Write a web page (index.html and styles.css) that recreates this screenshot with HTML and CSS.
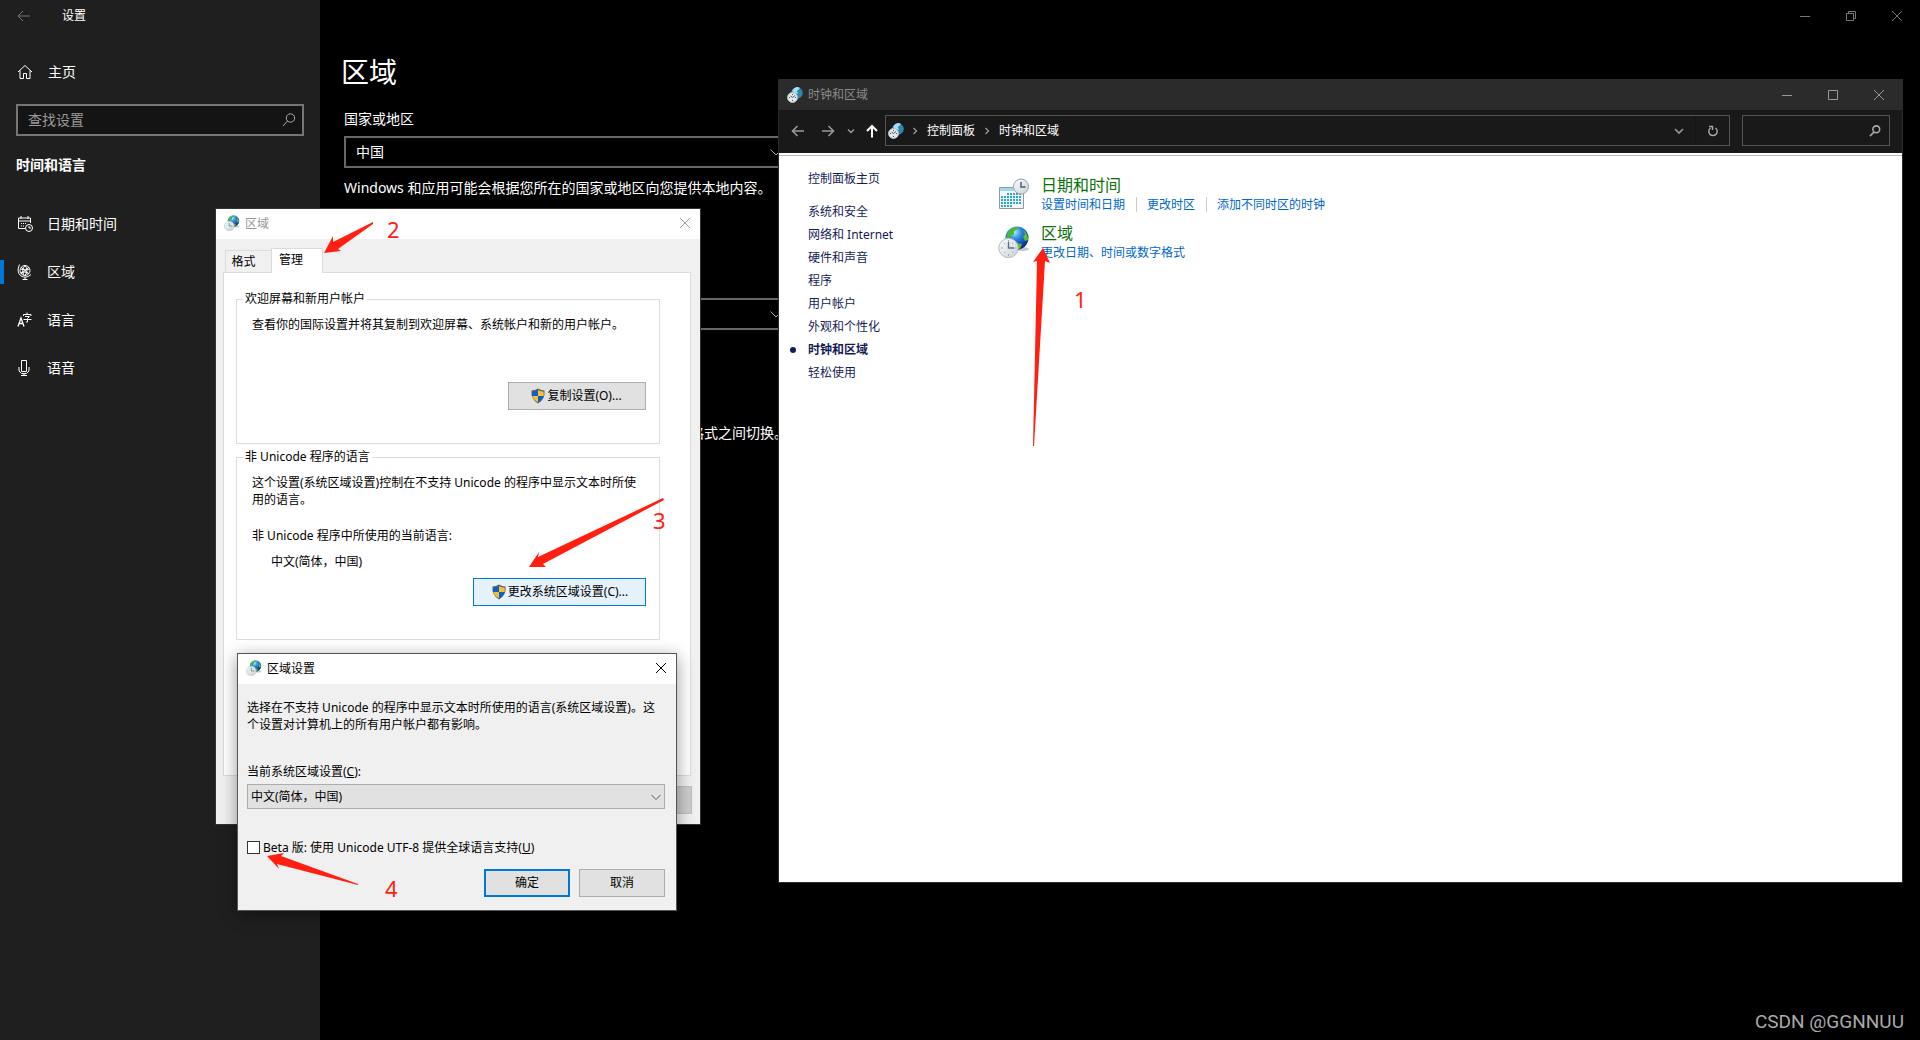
FILE: index.html
```html
<!DOCTYPE html>
<html lang="zh-CN">
  <head>
    <meta charset="utf-8" />
    <meta name="viewport" content="width=device-width, initial-scale=1" />
    <title>设置</title>
    <link rel="stylesheet" href="styles.css">
  </head>
  <body>
    <!-- shared icons -->
    <svg class="defs" width="0" height="0" aria-hidden="true">
      <defs>
        <radialGradient id="sea" cx="40%" cy="25%" r="80%">
          <stop offset="0" stop-color="#a8ecff" />
          <stop offset="0.35" stop-color="#2f8fe0" />
          <stop offset="0.75" stop-color="#1440b0" />
          <stop offset="1" stop-color="#0b1f70" />
        </radialGradient>
        <linearGradient id="face" x1="0" y1="0" x2="1" y2="1">
          <stop offset="0" stop-color="#fbfcfd" />
          <stop offset="1" stop-color="#c9d2d8" />
        </linearGradient>
      </defs>
      <symbol id="region" viewBox="0 0 32 32">
        <ellipse cx="23" cy="23" rx="8" ry="2" fill="#8a9299" opacity="0.5" />
        <circle cx="19" cy="12" r="11.500" fill="url(#sea)" />
        <path d="M9 8 Q12 2 18 1 L20 3 L16 5 L16 8 L12 10 L11 14 L8 15 Z" fill="#4cb82e" />
        <path d="M25 4 Q30 7 30 14 L27 15 L25 11 L27 8 Z M19 17 L24 18 L22 23 L19 22 Z" fill="#5fbf25" />
        <circle cx="10.500" cy="22" r="9.700" fill="url(#face)" stroke="#b4bcc1" />
        <path d="M10.500 14 V16 M10.500 28 V30 M3 22 H5 M16.500 22 H18.500 M6 17 L7 18 M15 27 L14 26 M6 27 L7 26 M15 17 L14 18" stroke="#a0a9af" fill="none" />
        <path d="M10.500 16 V22 H16" stroke="#5d7280" stroke-width="1.400" fill="none" />
      </symbol>
      <symbol id="clocks" viewBox="0 0 16 16">
        <circle cx="10" cy="6" r="5.800" fill="#2b87ad" />
        <path d="M5 4 Q7 0 11 0 L13 1 L10 4 L11 7 L7 6 Z" fill="#a9dcef" />
        <circle cx="5.500" cy="10.500" r="5" fill="#e6e9eb" stroke="#b5babd" />
        <path d="M5.500 7 V8 M5.500 13 V14 M2 10.500 H3 M8 10.500 H9 M3.500 9 L5.500 10.500 L8 8.500" stroke="#4b5357" fill="none" />
      </symbol>
      <symbol id="shield" viewBox="0 0 16 16">
        <path d="M8 0.500 Q11 2.500 14.500 2.500 Q15.500 11 8 15.500 Q0.500 11 1.500 2.500 Q5 2.500 8 0.500 Z" fill="#5a5e62" />
        <path d="M8 2 V8 H2.300 Q2.100 5.500 2.500 3.600 Q5.500 3.500 8 2 Z M8 8 H13.700 Q12.600 12 8 14.300 Z" fill="#0a62c8" />
        <path d="M8 2 V8 H13.700 Q13.900 5.500 13.500 3.600 Q10.500 3.500 8 2 Z M8 8 H2.300 Q3.400 12 8 14.300 Z" fill="#fbbd33" />
      </symbol>
      <symbol id="close" viewBox="0 0 12 12">
        <path d="M1 1 L11 11 M11 1 L1 11" stroke="currentColor" fill="none" />
      </symbol>
      <symbol id="min" viewBox="0 0 12 12">
        <path d="M1 6.500 H11" stroke="currentColor" fill="none" />
      </symbol>
      <symbol id="down" viewBox="0 0 12 12">
        <path d="M0.500 3.500 L6 9 L11.500 3.500" stroke="currentColor" fill="none" />
      </symbol>
      <symbol id="find" viewBox="0 0 14 14">
        <circle cx="8.500" cy="5" r="4.200" stroke="currentColor" fill="none" />
        <path d="M5.500 8 L1 13" stroke="currentColor" fill="none" />
      </symbol>
    </svg>

    <div class="settings">
      <nav class="side">
        <div class="side-title">
          <button class="back" aria-label="返回">
            <svg width="14" height="12" viewBox="0 0 14 12"><path d="M1 6 H13 M6 1 L1 6 L6 11" stroke="currentColor" fill="none" /></svg>
          </button>
          <span>设置</span>
        </div>
        <a class="item home" href="#home">
          <svg width="16" height="16" viewBox="0 0 16 16"><path d="M1 8 L8 1.500 L15 8 M3 6.500 V14.500 H6.500 V9.500 H9.500 V14.500 H13 V6.500" stroke="currentColor" fill="none" /></svg>
          主页
        </a>
        <div class="search">
          <input type="text" placeholder="查找设置" aria-label="查找设置" />
          <svg width="14" height="14"><use href="#find" /></svg>
        </div>
        <h2 class="side-head">时间和语言</h2>
        <a class="item" href="#datetime">
          <svg width="16" height="16" viewBox="0 0 16 16">
            <path d="M8 12.500 H1.500 V2 H13.500 V7 M1.500 5 H13.500 M4 0 V3 M11 0 V3" stroke="currentColor" fill="none" />
            <path d="M4 7.500 H9 M4 10 H7" stroke="currentColor" stroke-dasharray="1 1" fill="none" />
            <circle cx="12" cy="12" r="3.500" stroke="currentColor" fill="none" />
            <path d="M12 10 V12 H14" stroke="currentColor" fill="none" />
          </svg>
          日期和时间
        </a>
        <a class="item active" href="#region-page">
          <svg width="16" height="16" viewBox="0 0 16 16">
            <circle cx="8" cy="6.500" r="5" stroke="currentColor" fill="none" />
            <path d="M3.500 5 Q8 7 12.500 5 M3.500 8.500 Q8 7 12 9.500 M8 1.500 Q4 6 7 11.500 M8 1.500 Q12 6 8 11.500 M4 3 L12 10 M12 3 L4 10" stroke="currentColor" fill="none" />
            <path d="M2.500 0.500 Q-1 8 4 12 Q9 15 14 10.500 M8 13 V15 M5.500 15.500 H10.500" stroke="currentColor" fill="none" />
          </svg>
          区域
        </a>
        <a class="item" href="#language">
          <svg width="16" height="16" viewBox="0 0 16 16">
            <path d="M1 14.500 L4 6 L7 14.500 M2 11.500 H6" stroke="currentColor" stroke-width="1.300" fill="none" />
            <path d="M6.500 4 V2.500 H14 V4 M10 0.500 V2.500 M8 4.500 H12.500 L10.500 6.500 V10 H9 M6.500 7.500 H14.500" stroke="currentColor" fill="none" />
          </svg>
          语言
        </a>
        <a class="item" href="#speech">
          <svg width="16" height="16" viewBox="0 0 16 16"><path d="M4.500 0.500 H9.500 V11.500 H4.500 Z M2 7 V11 L4.500 13.500 H9.500 L12 11 V7 M7 13.500 V15.500 M4 15.500 H10" stroke="currentColor" fill="none" /></svg>
          语音
        </a>
      </nav>

      <main class="main">
        <div class="controls dim">
          <button aria-label="最小化"><svg width="12" height="12"><use href="#min" /></svg></button>
          <button aria-label="还原"><svg width="12" height="12" viewBox="0 0 12 12"><path d="M1.500 3.500 H8.500 V10.500 H1.500 Z M3.500 3.500 V1.500 H10.500 V8.500 H8.500" stroke="currentColor" fill="none" /></svg></button>
          <button aria-label="关闭"><svg width="12" height="12"><use href="#close" /></svg></button>
        </div>
        <div class="page">
          <h1>区域</h1>
          <label for="country">国家或地区</label>
          <div class="drop">
            <select id="country"><option>中国</option></select>
            <svg width="12" height="12"><use href="#down" /></svg>
          </div>
          <p>Windows 和应用可能会根据您所在的国家或地区向您提供本地内容。</p>
          <div class="drop second">
            <select aria-label="区域格式"><option></option></select>
            <svg width="12" height="12"><use href="#down" /></svg>
          </div>
          <p class="tail">格式之间切换。</p>
        </div>
      </main>
    </div>

    <section class="window panel">
      <header class="panel-title">
        <svg width="16" height="16"><use href="#clocks" /></svg>
        <span>时钟和区域</span>
        <div class="controls">
          <button aria-label="最小化"><svg width="12" height="12"><use href="#min" /></svg></button>
          <button aria-label="最大化"><svg width="12" height="12" viewBox="0 0 12 12"><path d="M1.500 1.500 H10.500 V10.500 H1.500 Z" stroke="currentColor" fill="none" /></svg></button>
          <button aria-label="关闭"><svg width="12" height="12"><use href="#close" /></svg></button>
        </div>
      </header>
      <div class="toolbar">
        <div class="arrows">
          <button aria-label="后退"><svg width="14" height="14" viewBox="0 0 14 14"><path d="M1 7 H13 M6.500 2 L1.500 7 L6.500 12" stroke="currentColor" stroke-width="1.600" fill="none" /></svg></button>
          <button aria-label="前进"><svg width="14" height="14" viewBox="0 0 14 14"><path d="M1 7 H13 M7.500 2 L12.500 7 L7.500 12" stroke="currentColor" stroke-width="1.600" fill="none" /></svg></button>
          <button class="recent" aria-label="最近"><svg width="8" height="8" viewBox="0 0 8 8"><path d="M1 2.500 L4 5.500 L7 2.500" stroke="currentColor" stroke-width="1.500" fill="none" /></svg></button>
          <button class="up" aria-label="向上"><svg width="14" height="14" viewBox="0 0 14 14"><path d="M7 1.500 V13.500 M2 7 L7 2 L12 7" stroke="currentColor" stroke-width="2" fill="none" /></svg></button>
        </div>
        <div class="address">
          <svg width="16" height="16"><use href="#clocks" /></svg>
          <svg class="sep" width="8" height="8" viewBox="0 0 8 8"><path d="M2.500 1 L5.500 4 L2.500 7" stroke="currentColor" stroke-width="1.300" fill="none" /></svg>
          <a href="#panel">控制面板</a>
          <svg class="sep" width="8" height="8" viewBox="0 0 8 8"><path d="M2.500 1 L5.500 4 L2.500 7" stroke="currentColor" stroke-width="1.300" fill="none" /></svg>
          <a href="#clock">时钟和区域</a>
          <button class="history" aria-label="历史"><svg width="10" height="10" viewBox="0 0 10 10"><path d="M1 3 L5 7 L9 3" stroke="currentColor" stroke-width="1.600" fill="none" /></svg></button>
          <button class="reload" aria-label="刷新"><svg width="12" height="12" viewBox="0 0 12 12"><path d="M8.500 3 A4.200 4.200 0 1 1 3.500 3 M2 1.500 H5.500 V5" stroke="currentColor" stroke-width="1.400" fill="none" /></svg></button>
        </div>
        <div class="find">
          <input type="text" aria-label="搜索控制面板" />
          <svg width="12" height="12" viewBox="0 0 14 14"><circle cx="8.500" cy="5" r="4" stroke="currentColor" stroke-width="1.800" fill="none" /><path d="M6 8 L1 13" stroke="currentColor" stroke-width="1.800" /></svg>
        </div>
      </div>
      <div class="panel-body">
        <nav class="links">
          <a class="first" href="#panel">控制面板主页</a>
          <a href="#security">系统和安全</a>
          <a href="#network">网络和 Internet</a>
          <a href="#hardware">硬件和声音</a>
          <a href="#programs">程序</a>
          <a href="#accounts">用户帐户</a>
          <a href="#appearance">外观和个性化</a>
          <a class="current" href="#clock">时钟和区域</a>
          <a href="#ease">轻松使用</a>
        </nav>
        <div class="groups">
          <article class="group">
            <svg width="32" height="32" viewBox="0 0 32 32">
              <path d="M1.500 9.500 H25.500 V30.500 H1.500 Z" fill="#f4f8fa" stroke="#8e9ba2" />
              <path d="M2 10 H25 V13 H2 Z" fill="#9fd8e8" />
              <path d="M9 16 H24 M3 19 H24 M3 22 H24 M3 25 H24 M3 28 H15" stroke="#2ba6c9" stroke-width="2" stroke-dasharray="2 1" />
              <circle cx="23" cy="8.500" r="7.500" fill="url(#face)" stroke="#9aa4aa" />
              <path d="M23 4 V9 H27.500" stroke="#4e6270" stroke-width="1.500" fill="none" />
            </svg>
            <div>
              <h3><a href="#date">日期和时间</a></h3>
              <ul>
                <li><a href="#set">设置时间和日期</a></li>
                <li><a href="#zone">更改时区</a></li>
                <li><a href="#add">添加不同时区的时钟</a></li>
              </ul>
            </div>
          </article>
          <article class="group">
            <svg width="32" height="32"><use href="#region" /></svg>
            <div>
              <h3><a href="#region-link">区域</a></h3>
              <ul>
                <li><a href="#format">更改日期、时间或数字格式</a></li>
              </ul>
            </div>
          </article>
        </div>
      </div>
    </section>

    <section class="window dialog region-dialog">
      <header class="dialog-title inactive">
        <svg width="16" height="16"><use href="#region" /></svg>
        <span>区域</span>
        <button aria-label="关闭"><svg width="12" height="12"><use href="#close" /></svg></button>
      </header>
      <div class="region-body">
        <div class="tabs">
          <button class="tab">格式</button>
          <button class="tab selected">管理</button>
        </div>
        <div class="tab-page">
          <fieldset>
            <legend>欢迎屏幕和新用户帐户</legend>
            <p>查看你的国际设置并将其复制到欢迎屏幕、系统帐户和新的用户帐户。</p>
            <div class="row copy-row">
              <button class="btn copy"><svg width="16" height="16"><use href="#shield" /></svg>复制设置(O)...</button>
            </div>
          </fieldset>
          <fieldset>
            <legend>非 Unicode 程序的语言</legend>
            <p>这个设置(系统区域设置)控制在不支持 Unicode 的程序中显示文本时所使用的语言。</p>
            <p class="now">非 Unicode 程序中所使用的当前语言:</p>
            <p class="lang">中文(简体，中国)</p>
            <div class="row">
              <button class="btn change"><svg width="16" height="16"><use href="#shield" /></svg>更改系统区域设置(C)...</button>
            </div>
          </fieldset>
        </div>
        <div class="row foot">
          <button class="btn off" aria-label="应用" disabled></button>
        </div>
      </div>
    </section>

    <section class="window dialog locale-dialog">
      <header class="dialog-title">
        <svg width="16" height="16"><use href="#region" /></svg>
        <span>区域设置</span>
        <button aria-label="关闭"><svg width="12" height="12"><use href="#close" /></svg></button>
      </header>
      <form class="locale-body">
        <p>选择在不支持 Unicode 的程序中显示文本时所使用的语言(系统区域设置)。这个设置对计算机上的所有用户帐户都有影响。</p>
        <label class="locale-label" for="locale">当前系统区域设置(<u>C</u>):</label>
        <div class="combo">
          <select id="locale"><option>中文(简体，中国)</option></select>
          <svg width="10" height="10" viewBox="0 0 12 12"><use href="#down" /></svg>
        </div>
        <div class="check">
          <input type="checkbox" id="utf8" />
          <label for="utf8">Beta 版: 使用 Unicode UTF-8 提供全球语言支持(<u>U</u>)</label>
        </div>
        <div class="row">
          <button type="button" class="btn ok">确定</button>
          <button type="button" class="btn cancel">取消</button>
        </div>
      </form>
    </section>

    <!-- step arrows drawn over the windows -->
    <svg class="marks" width="1100" height="920">
      <path d="M1043 248 L1033 262 L1037 261 L1033 446 H1034 L1045 261 L1050 263 Z" />
      <path d="M324 253 L333 236 L333 242 L373 222 V224 L338 249 L341 251 Z" />
      <path d="M529 567 L539 552 L538 557 L663 498 L664 500 L543 564 L546 567 Z" />
      <path d="M267 856 L284 853 L281 856 L358 884 V885 L277 864 L279 869 Z" />
      <text x="1074" y="308">1</text>
      <text x="387" y="238">2</text>
      <text x="653" y="529">3</text>
      <text x="385" y="897">4</text>
    </svg>
    <div class="watermark">CSDN @GGNNUU</div>
  </body>
</html>
```

FILE: styles.css
```css
* {box-sizing: border-box}
body {
  margin: 0;
  background: #000;
  color: #fff;
  font: 14px/20px "Noto Sans", "Noto Sans CJK SC", sans-serif;
  position: relative;
  min-height: 100vh;
  overflow: hidden;
}
button, input, select {
  font: inherit;
  color: inherit;
  border: 0;
  border-radius: 0;
  background: none;
  padding: 0;
  margin: 0;
  outline: 0;
}
select {appearance: none}
a {color: inherit; text-decoration: none}
p, h1, h2, h3, ul {margin: 0; padding: 0}
svg {display: block; flex: none}
.defs {position: absolute}

/* settings app */
.settings {
  display: flex;
  min-height: 100vh;
}
.side {
  width: 320px;
  background: #1f1f1f;
}
.side-title {
  display: flex;
  align-items: center;
  height: 32px;
  padding-left: 17px;
  gap: 31px;
  font-size: 12px;
}
.back {color: #777}
.item {
  display: flex;
  align-items: center;
  height: 48px;
  padding-left: 13px;
  gap: 14px;
  border-left: 4px solid transparent;
}
.item.active {
  border-image: linear-gradient(transparent 25%, #0078d7 25% 75%, transparent 75%) 0 0 0 4;
}
.home {gap: 15px; margin: 16px 0 8px}
.search {
  display: flex;
  align-items: center;
  margin: 0 16px;
  height: 32px;
  padding: 0 6px 1px 10px;
  border: 2px solid #767676;
  background: #141414;
}
.search input {flex: 1; min-width: 0}
.search input::placeholder {color: #9a9a9a; opacity: 1}
.search svg {color: #aaa}
.side-head {
  font-size: 14px;
  line-height: 20px;
  margin: 19px 16px 25px;
}
.main {
  flex: 1;
  min-width: 0;
}
.controls {
  display: flex;
  justify-content: flex-end;
  height: 32px;
  color: #999;
}
.controls.dim {color: #777}
.controls button {
  display: grid;
  place-items: center;
  width: 46px;
}
.page {
  width: 468px;
  padding: 20px 0 0 24px;
}
.page h1 {
  font-size: 28px;
  line-height: 40px;
  font-weight: 400;
  margin-left: -3px;
}
.page label {
  display: block;
  margin: 17px 0 7px;
}
.drop {
  display: grid;
  align-items: center;
}
.drop select {
  grid-area: 1 / 1;
  height: 32px;
  padding-left: 10px;
  border: 2px solid #666;
}
.drop svg {
  grid-area: 1 / 1;
  justify-self: end;
  margin-right: 6px;
  color: #aaa;
}
.page p {margin-top: 10px; white-space: nowrap}
.page .second {margin-top: 100px}
.page .tail {
  margin-top: 93px;
  text-align: right;
}

/* windows */
.window {
  position: absolute;
  font-size: 12px;
  line-height: 17px;
}
.panel {
  inset: 79px 17px 157px 778px;
  display: flex;
  flex-direction: column;
  background: #fff;
  border: 1px solid #2b2b2b;
  border-top: 0;
}
.panel-title {
  display: flex;
  align-items: center;
  height: 31px;
  padding-left: 8px;
  gap: 5px;
  background: #2b2b2b;
  color: #8a8a8a;
}
.panel-title .controls {margin-left: auto; height: 31px}
.toolbar {
  display: flex;
  align-items: flex-start;
  height: 43px;
  padding: 5px 12px 0 12px;
  background: #191919;
  color: #fff;
}
.arrows {
  display: flex;
  align-items: center;
  width: 94px;
  height: 31px;
  color: #999;
}
.arrows button {width: 14px; margin-right: 16px}
.arrows .recent {width: 8px; margin: 0 10px 0 -4px}
.arrows .up {margin: 0; color: #fff}
.address, .find {
  display: flex;
  align-items: center;
  height: 31px;
  border: 1px solid #535353;
}
.address {
  flex: 1;
  padding-left: 2px;
}
.address .sep {
  margin: 0 8px 0 7px;
  color: #999;
}
.address a + .sep {margin: 0 8px}
.history {margin-left: auto; color: #999}
.reload {
  display: grid;
  place-items: center;
  width: 34px;
  height: 29px;
  margin-left: 11px;
  border-left: 1px solid #141414;
  color: #aaa;
}
.find {
  width: 148px;
  margin-left: 12px;
  padding-right: 8px;
  color: #aaa;
}
.find input {flex: 1; min-width: 0}
.panel-body {
  flex: 1;
  display: flex;
  margin-top: 2px;
  border-top: 1px solid #bbb;
  padding: 11px 0 0 29px;
}
.links {
  display: flex;
  flex-direction: column;
  width: 190px;
  color: #151c55;
  line-height: 23px;
}
.links .first {margin-bottom: 10px}
.links .current {font-weight: 700}
.links .current::before {
  content: "";
  float: left;
  width: 6px;
  height: 6px;
  margin: 9px 12px 0 -18px;
  border-radius: 50%;
  background: #151c55;
}
.groups {
  display: flex;
  flex-direction: column;
  gap: 8px;
  padding-top: 7px;
}
.group {
  display: flex;
  gap: 11px;
  height: 40px;
}
.group svg {margin-top: 4px}
.group h3 {
  font-size: 16px;
  line-height: 23px;
  font-weight: 400;
  color: #0a720a;
}
.group ul {
  display: flex;
  list-style: none;
  color: #0066cc;
  line-height: 15px;
}
.group li + li {
  margin-left: 11px;
  padding-left: 10px;
  border-left: 1px solid #ccc;
}

/* dialogs */
.dialog {
  border: 1px solid #333;
  background: #f0f0f0;
  color: #000;
}
.dialog-title {
  display: flex;
  align-items: center;
  height: 30px;
  padding: 0 9px 2px 8px;
  gap: 5px;
  background: #fff;
}
.dialog-title.inactive {color: #999}
.dialog-title button {margin-left: auto}
.region-dialog {
  top: 208px;
  left: 215px;
  width: 486px;
}
.region-body {padding: 9px 8px 10px 7px}
.tabs {
  display: flex;
  align-items: flex-end;
  padding-left: 2px;
}
.tab {
  width: 46px;
  height: 22px;
  padding-right: 10px;
  border: 1px solid #dcdcdc;
  border-width: 1px 0 0 1px;
}
.tab.selected {
  width: 52px;
  height: 25px;
  margin-bottom: -1px;
  padding: 0 12px 3px 0;
  border-right-width: 1px;
  background: #fff;
  position: relative;
}
.tab-page {
  margin-right: 1px;
  border: 1px solid #dcdcdc;
  background: #fff;
  padding: 18px 30px 130px 12px;
}
fieldset {
  margin: 0 0 5px;
  padding: 9px 13px 33px 15px;
  border: 1px solid #dcdcdc;
  min-width: 0;
}
legend {
  padding: 0 2px;
  margin-left: -9px;
  line-height: 16px;
}
.now {margin-top: 19px}
.lang {margin: 9px 0 8px 19px}
.row {
  display: flex;
  justify-content: flex-end;
  gap: 9px;
}
.copy-row {margin-top: 49px}
.btn {
  display: flex;
  align-items: center;
  justify-content: center;
  width: 86px;
  height: 28px;
  padding-bottom: 1px;
  border: 1px solid #adadad;
  background: #e1e1e1;
}
.btn svg {margin-right: 1px}
.copy {width: 138px; padding-right: 2px}
.change {
  width: 173px;
  border-color: #0078d7;
  background: #e5f1fb;
}
.foot {margin-top: 10px}
.off {
  border-color: #bfbfbf;
  background: #ccc;
}
.locale-dialog {
  top: 653px;
  left: 237px;
  width: 440px;
  border-color: #555;
  box-shadow: 0 4px 16px rgba(0, 0, 0, 0.4);
}
.locale-body {padding: 15px 11px 13px 9px}
.locale-label {
  display: block;
  margin: 30px 0 4px;
}
.combo {
  display: grid;
  align-items: center;
}
.combo select {
  grid-area: 1 / 1;
  height: 25px;
  padding-left: 3px;
  border: 1px solid #adadad;
  background: #e1e1e1;
}
.combo svg {
  grid-area: 1 / 1;
  justify-self: end;
  margin-right: 4px;
  color: #444;
}
.check {
  display: flex;
  align-items: center;
  gap: 3px;
  margin: 30px 0 13px;
}
.check input {
  appearance: none;
  width: 13px;
  height: 13px;
  border: 1px solid #333;
  background: #fff;
}
.ok {border: 2px solid #0078d7}

.marks {
  position: absolute;
  top: 0;
  left: 0;
  pointer-events: none;
  fill: #ff2012;
  font-size: 22px;
}
.watermark {
  position: absolute;
  right: 16px;
  bottom: 7px;
  font: 19px/22px Roboto, sans-serif;
  color: #aaa;
}
```
